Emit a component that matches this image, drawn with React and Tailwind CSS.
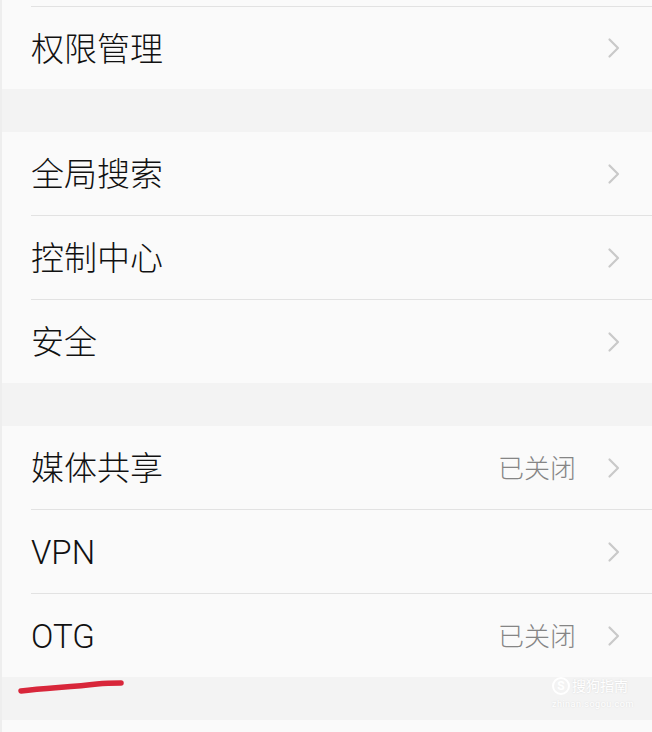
import React from "react";

const Chevron = () => (
  <svg width="16" height="22" viewBox="0 0 16 22" className="shrink-0">
    <path d="M3.5 2.5 L12 11 L3.5 19.5" fill="none" stroke="#c9c9c9" strokeWidth="2.2" strokeLinecap="round" strokeLinejoin="round" />
  </svg>
);

const Row = ({ label, value, h = "h-[83px]" }) => (
  <div className={`flex items-center ${h} bg-[#fafafa] pl-[29px] pr-[30px]`}>
    <span className="flex-1 pt-[2px] text-[33px] leading-none font-light text-[#111]">{label}</span>
    {value && <span className="mr-[30px] pt-[2px] text-[26px] leading-none font-light text-[#858585]">{value}</span>}
    <Chevron />
  </div>
);

const Divider = () => (
  <div className="h-px bg-[#fafafa] pl-[29px]">
    <div className="h-px bg-[#e2e2e2]" />
  </div>
);

const Gap = () => <div className="h-[43px] bg-[#f3f3f3]" />;

export default function App() {
  return (
    <div
      className="relative w-[652px] h-[732px] overflow-hidden bg-[#fafafa] border-l-2 border-[#eeeeee]"
      style={{ fontFamily: 'Roboto, "Noto Sans CJK SC", sans-serif' }}
    >
      <div className="flex flex-col">
        <div className="h-[6px] bg-[#fafafa]" />
        <Divider />
        <Row label="权限管理" h="h-[82px]" />
        <Gap />
        <Row label="全局搜索" />
        <Divider />
        <Row label="控制中心" />
        <Divider />
        <Row label="安全" />
        <Gap />
        <Row label="媒体共享" value="已关闭" />
        <Divider />
        <Row label="VPN" />
        <Divider />
        <Row label="OTG" value="已关闭" />
        <Gap />
        <div className="h-[12px] bg-[#fafafa]" />
      </div>

      <svg className="absolute left-0 top-[676px]" width="140" height="30" viewBox="0 0 140 30">
        <path d="M19 15 C45 12, 70 11, 95 8 C105 7, 112 7, 119 7" fill="none" stroke="#d8263a" strokeWidth="5.5" strokeLinecap="round" />
      </svg>

      <div className="absolute left-[550px] top-[677px] flex flex-col items-start whitespace-nowrap">
        <div className="flex items-center gap-[2px]">
          <div className="w-[18px] h-[18px] rounded-full border-2 border-white flex items-center justify-center text-[12px] leading-none font-bold text-white">S</div>
          <span className="text-[14px] leading-none text-white" style={{ textShadow: "0 0 2px rgba(0,0,0,0.12)" }}>搜狗指南</span>
        </div>
        <span className="mt-[5px] text-[9px] leading-none tracking-[0.5px] text-white" style={{ textShadow: "0 0 2px rgba(0,0,0,0.12)" }}>zhinan.sogou.com</span>
      </div>
    </div>
  );
}
